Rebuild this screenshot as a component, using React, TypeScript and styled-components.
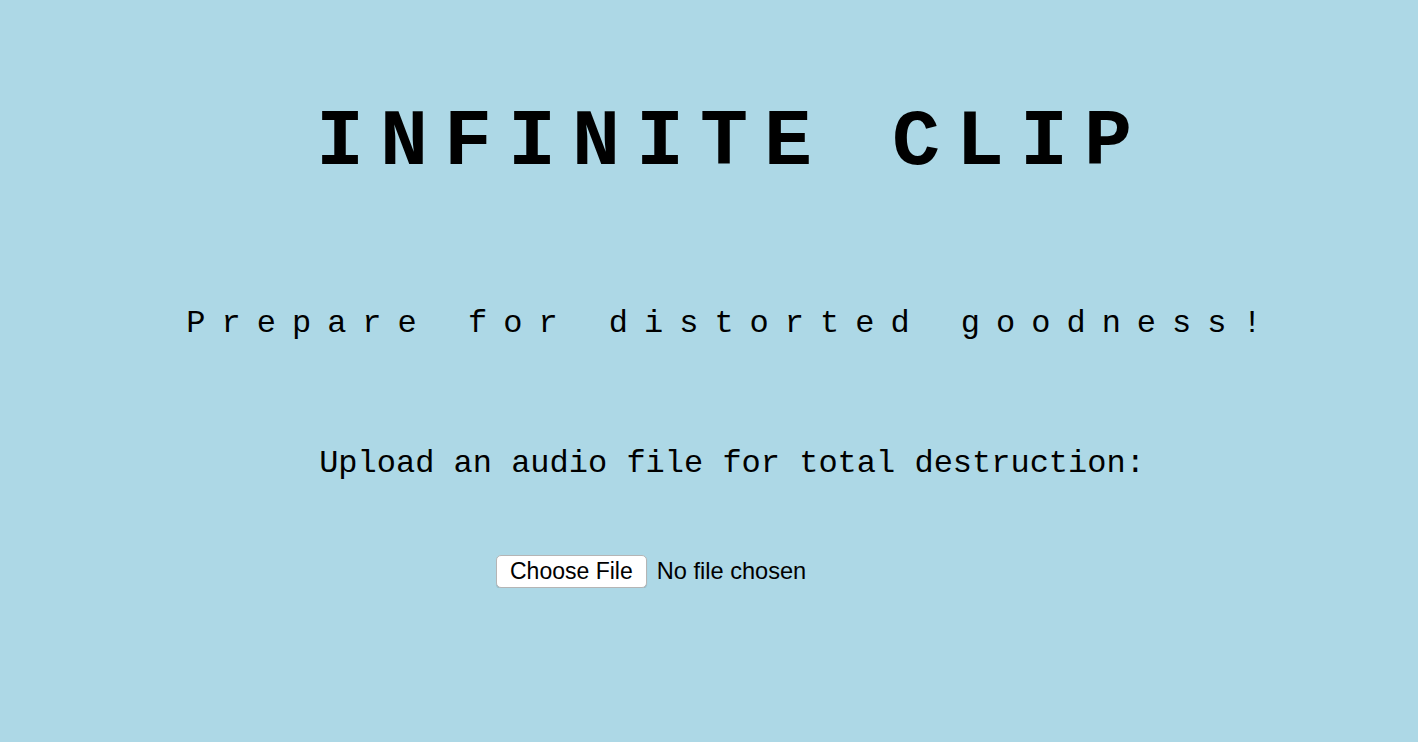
import React from "react";
import styled, { createGlobalStyle } from "styled-components";

const GlobalStyle = createGlobalStyle`
  html, body {
    margin: 0;
    padding: 0;
    background: #add8e6;
  }
  body {
    min-height: 742px;
    font-family: "Liberation Mono", "Courier New", monospace;
    color: #000;
  }
`;

const Page = styled.main`
  box-sizing: border-box;
  min-height: 742px;
  padding: 103px 0 0 46px;
  text-align: center;
`;

const Title = styled.h1`
  margin: 0;
  font-family: "Liberation Mono", "Courier New", monospace;
  font-weight: bold;
  font-size: 80px;
  line-height: 80px;
  letter-spacing: 16px;
`;

const Tagline = styled.h2`
  margin: 125px 0 0;
  font-family: "Liberation Mono", "Courier New", monospace;
  font-weight: normal;
  font-size: 32px;
  line-height: 32px;
  letter-spacing: 16px;
`;

const Prompt = styled.h3`
  margin: 108px 0 0;
  font-family: "Liberation Mono", "Courier New", monospace;
  font-weight: normal;
  font-size: 32px;
  line-height: 32px;
`;

const UploadForm = styled.form`
  margin: 75px 0 0;
  padding-left: 450px;
  text-align: left;
`;

const FileInput = styled.input`
  font-family: "Liberation Sans", Arial, sans-serif;
  font-size: 23.6px;
  color: #000;

  &::file-selector-button {
    font-family: "Liberation Sans", Arial, sans-serif;
    font-size: 23px;
    color: #000;
    background: #fff;
    border: 1px solid #b5b5b5;
    border-radius: 5px;
    box-shadow: 0 1px 1px rgba(0, 0, 0, 0.15);
    height: 33px;
    padding: 0 13px;
    margin: 0 10px 0 0;
  }
`;

export default function App() {
  return (
    <>
      <GlobalStyle />
      <Page>
        <Title>INFINITE CLIP</Title>
        <Tagline>Prepare for distorted goodness!</Tagline>
        <Prompt>Upload an audio file for total destruction:</Prompt>
        <UploadForm>
          <FileInput type="file" accept="audio/*" />
        </UploadForm>
      </Page>
    </>
  );
}
